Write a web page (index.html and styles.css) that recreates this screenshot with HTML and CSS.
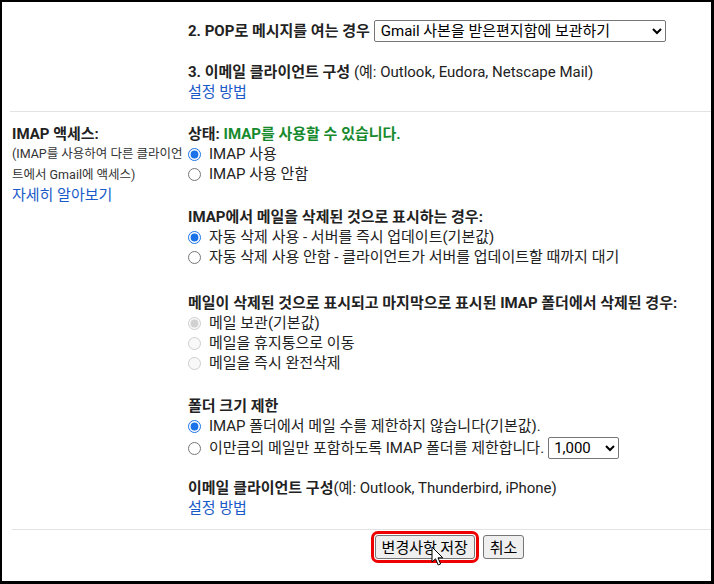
FILE: index.html
```html
<html>
<head>
<title>설정 - 전달 및 POP/IMAP</title>
<link rel="stylesheet" href="styles.css">
</head>
<body>
  <div class="frame">
    <!-- POP 설정의 나머지 부분 -->
    <div class="row pop">
      <div class="label"></div>
      <div class="field">
        <div class="line select-line">
          <b>2. POP</b><b class="ko">로 메시지를 여는 경우</b>
          <select class="sel-wide">
            <option>Gmail 사본을 받은편지함에 보관하기</option>
            <option>Gmail 사본을 읽은 상태로 표시하기</option>
            <option>Gmail 사본을 보관처리하기</option>
            <option>Gmail 사본 삭제하기</option>
          </select>
        </div>
        <div class="line gap"><b>3. 이메일 클라이언트 구성</b> (예: Outlook, Eudora, Netscape Mail)</div>
        <div class="line"><a href="#">설정 방법</a></div>
      </div>
    </div>

    <hr class="divider">

    <!-- IMAP 액세스 -->
    <div class="row imap">
      <div class="label">
        <div class="line"><b>IMAP 액세스:</b></div>
        <div class="hint">(IMAP를 사용하여 다른 클라이언트에서 Gmail에 액세스)</div>
        <div class="line"><a href="#">자세히 알아보기</a></div>
      </div>
      <div class="field">
        <div class="line"><b>상태: </b><b class="ok">IMAP를 사용할 수 있습니다.</b></div>
        <label class="line"><input type="radio" name="imap" checked>IMAP 사용</label>
        <label class="line"><input type="radio" name="imap">IMAP 사용 안함</label>

        <div class="group g1">
          <div class="line"><b>IMAP에서 메일을 삭제된 것으로 표시하는 경우:</b></div>
          <label class="line"><input type="radio" name="expunge" checked>자동 삭제 사용 - 서버를 즉시 업데이트(기본값)</label>
          <label class="line"><input type="radio" name="expunge">자동 삭제 사용 안함 - 클라이언트가 서버를 업데이트할 때까지 대기</label>
        </div>

        <div class="group g2">
          <div class="line"><b>메일이 삭제된 것으로 표시되고 마지막으로 표시된 IMAP 폴더에서 삭제된 경우:</b></div>
          <label class="line"><input type="radio" name="deleted" checked disabled>메일 보관(기본값)</label>
          <label class="line"><input type="radio" name="deleted" disabled>메일을 휴지통으로 이동</label>
          <label class="line"><input type="radio" name="deleted" disabled>메일을 즉시 완전삭제</label>
        </div>

        <div class="group g3">
          <div class="line"><b>폴더 크기 제한</b></div>
          <label class="line"><input type="radio" name="limit" checked>IMAP 폴더에서 메일 수를 제한하지 않습니다(기본값).</label>
          <label class="line select-line"><input type="radio" name="limit">이만큼의 메일만 포함하도록 IMAP 폴더를 제한합니다.
            <select class="sel-small">
              <option>1,000</option>
              <option>2,000</option>
              <option>5,000</option>
              <option>10,000</option>
            </select>
          </label>
        </div>

        <div class="group last">
          <div class="line"><b>이메일 클라이언트 구성</b>(예: Outlook, Thunderbird, iPhone)</div>
          <div class="line"><a href="#">설정 방법</a></div>
        </div>
      </div>
    </div>

    <hr class="divider second">

    <div class="row actions">
      <div class="label"></div>
      <div class="buttons">
        <span class="save-wrap">
          <button class="save">변경사항 저장</button>
          <svg class="pointer" width="13" height="21" viewBox="0 0 13 21">
            <path d="M1 1 L1 16 L4.5 12.8 L7.2 19 L9.6 18 L7 11.8 L11.8 11.8 Z" fill="#fff" stroke="#000" stroke-width="1" stroke-linejoin="round"/>
          </svg>
        </span>
        <button>취소</button>
      </div>
    </div>
  </div>
</body>
</html>
```

FILE: styles.css
```css
html
{
  background: #000;
}

body
{
  margin: 0;
  font-family: Roboto, "Noto Sans CJK KR", sans-serif;
  font-size: 15px;
  color: #222;
}

.frame
{
  margin: 2px 3px 3px 2px;
  height: 579px;
  background: #fff;
  overflow: hidden;
}

.row
{
  display: grid;
  grid-template-columns: 176px 1fr;
  margin-left: 10px;
}

.line
{
  display: block;
  line-height: 20px;
  white-space: nowrap;
}

b { font-weight: bold; }

a
{
  color: #1a5ac8;
  text-decoration: none;
}

/* POP 영역 */
.pop { padding-top: 18px; }

.select-line
{
  display: flex;
  align-items: center;
  height: 24px;
}

.pop .select-line { height: 22px; }

.gap { margin-top: 20px; }

.sel-wide
{
  margin-left: 4px;
  width: 292px;
  height: 22px;
  font: inherit;
  font-size: 15px;
  color: #000;
  padding: 0 2px;
  border: 1px solid #767676;
  border-radius: 2px;
  background: #fff;
}

.sel-small
{
  margin-left: 4px;
  width: 71px;
  height: 22px;
  font: inherit;
  font-size: 15px;
  color: #000;
  padding: 0 1px;
  border: 1px solid #767676;
  border-radius: 2px;
  background: #fff;
}

.divider
{
  margin: 9px 0 0 8px;
  border: 0;
  border-top: 1px solid #e3e3e3;
}

.divider.second { margin: 11px 0 0 10px; }

/* IMAP 영역 */
.imap { padding-top: 12px; }

.hint
{
  font-size: 12.5px;
  line-height: 20.5px;
  width: 176px;
  color: #333;
}

.ok { color: #188a2e; }

input[type=radio]
{
  margin: 0 8px 0 0;
  width: 13px;
  height: 13px;
  vertical-align: -2px;
  accent-color: #1a73e8;
}

.group { margin-top: 23px; }
.group.g2 { margin-top: 26px; }
.group.g3 { margin-top: 23px; }
.group.last { margin-top: 18px; }

/* 하단 버튼 */
.actions { padding-top: 5px; }

.buttons
{
  display: flex;
  justify-content: center;
  gap: 8px;
}

button
{
  font-family: "Noto Sans CJK KR", sans-serif;
  font-size: 15px;
  height: 24px;
  padding: 0 6px;
  color: #000;
  background: #efefef;
  border: 1px solid #767676;
  border-radius: 3px;
  line-height: 20px;
}

.save-wrap { position: relative; }

.save
{
  padding: 0 6px;
  outline: 3px solid #ee0000;
  outline-offset: 1px;
  border-radius: 3px;
}

.pointer
{
  position: absolute;
  left: 56px;
  top: 11px;
}
```
